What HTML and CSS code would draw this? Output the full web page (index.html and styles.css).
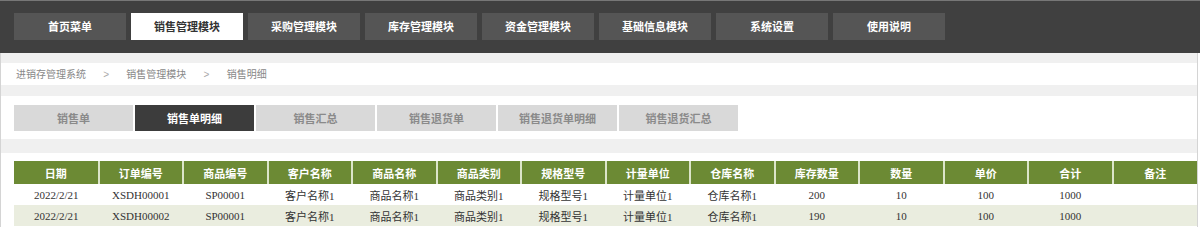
FILE: index.html
```html
<!DOCTYPE html>
<html lang="zh-CN">
<head>
    <meta charset="UTF-8">
    <meta name="viewport" content="width=device-width, initial-scale=1.0">
    <title>进销存管理系统 - 销售明细</title>
    <link rel="stylesheet" href="styles.css">
</head>
<body>

<!-- Top menu -->
<div class="topbar">
    <a class="nav-btn" href="#">首页菜单</a>
    <a class="nav-btn active" href="#">销售管理模块</a>
    <a class="nav-btn" href="#">采购管理模块</a>
    <a class="nav-btn" href="#">库存管理模块</a>
    <a class="nav-btn" href="#">资金管理模块</a>
    <a class="nav-btn" href="#">基础信息模块</a>
    <a class="nav-btn" href="#">系统设置</a>
    <a class="nav-btn" href="#">使用说明</a>
</div>

<div class="main">
    <!-- Breadcrumb -->
    <div class="crumbs">
        <span>进销存管理系统</span>
        <span class="sep">&gt;</span>
        <span>销售管理模块</span>
        <span class="sep">&gt;</span>
        <span>销售明细</span>
    </div>

    <!-- Sub tabs -->
    <div class="tabs">
        <a class="tab" href="#">销售单</a>
        <a class="tab active" href="#">销售单明细</a>
        <a class="tab" href="#">销售汇总</a>
        <a class="tab" href="#">销售退货单</a>
        <a class="tab" href="#">销售退货单明细</a>
        <a class="tab" href="#">销售退货汇总</a>
    </div>

    <!-- Detail table -->
    <div class="table-wrap">
        <table class="detail">
            <thead>
                <tr>
                    <th>日期</th>
                    <th>订单编号</th>
                    <th>商品编号</th>
                    <th>客户名称</th>
                    <th>商品名称</th>
                    <th>商品类别</th>
                    <th>规格型号</th>
                    <th>计量单位</th>
                    <th>仓库名称</th>
                    <th>库存数量</th>
                    <th>数量</th>
                    <th>单价</th>
                    <th>合计</th>
                    <th>备注</th>
                </tr>
            </thead>
            <tbody>
                <tr>
                    <td>2022/2/21</td>
                    <td>XSDH00001</td>
                    <td>SP00001</td>
                    <td>客户名称1</td>
                    <td>商品名称1</td>
                    <td>商品类别1</td>
                    <td>规格型号1</td>
                    <td>计量单位1</td>
                    <td>仓库名称1</td>
                    <td>200</td>
                    <td>10</td>
                    <td>100</td>
                    <td>1000</td>
                    <td></td>
                </tr>
                <tr class="alt">
                    <td>2022/2/21</td>
                    <td>XSDH00002</td>
                    <td>SP00001</td>
                    <td>客户名称1</td>
                    <td>商品名称1</td>
                    <td>商品类别1</td>
                    <td>规格型号1</td>
                    <td>计量单位1</td>
                    <td>仓库名称1</td>
                    <td>190</td>
                    <td>10</td>
                    <td>100</td>
                    <td>1000</td>
                    <td></td>
                </tr>
            </tbody>
        </table>
    </div>
</div>

</body>
</html>
```

FILE: styles.css
```css
body {
    margin: 0;
    font-family: "Noto Sans CJK SC", sans-serif;
    background-color: #fff;
}
a {
    text-decoration: none;
}

/* top menu */
.topbar {
    display: flex;
    gap: 5px;
    height: 27px;
    padding: 12px 14px 13px;
    background-color: #404040;
    border-top: 1px solid #777;
}
.nav-btn {
    width: 112px;
    height: 27px;
    line-height: 27px;
    text-align: center;
    background-color: #555;
    color: #fff;
    font-size: 11px;
    font-weight: bold;
}
.nav-btn.active {
    background-color: #fff;
    color: #333;
}

/* page body */
.main {
    width: 1198px;
    box-sizing: border-box;
    padding-top: 10px;
    background-color: #f0f0f0;
    border-left: 1px solid #d4d4d4;
    border-right: 1px solid #d4d4d4;
}
.crumbs {
    height: 22px;
    line-height: 22px;
    padding-left: 15px;
    margin-bottom: 11px;
    background-color: #fff;
    color: #888;
    font-size: 10px;
}
.crumbs .sep {
    padding: 0 15px;
    font-family: "Liberation Sans", sans-serif;
    color: #aaa;
}

.tabs {
    display: flex;
    gap: 2px;
    padding: 9px 13px 8px;
    margin-bottom: 14px;
    background-color: #fff;
}
.tab {
    width: 119px;
    height: 26px;
    line-height: 26px;
    text-align: center;
    background-color: #d9d9d9;
    color: #8a8a8a;
    font-size: 11px;
    font-weight: bold;
}
.tab.active {
    background-color: #3c3c3c;
    color: #fff;
}

/* table */
.table-wrap {
    padding: 8px 0 20px 13px;
    background-color: #fff;
}
.detail {
    width: 1183px;
    border-collapse: collapse;
    table-layout: fixed;
}
.detail th {
    height: 23px;
    padding: 0;
    background-color: #6c8a34;
    color: #fff;
    font-size: 11px;
    font-weight: bold;
    border-left: 2px solid #dce5c9;
}
.detail th:first-child {
    border-left: none;
}
.detail td {
    height: 21px;
    padding: 0;
    text-align: center;
    color: #333;
    font-size: 11px;
    font-family: "Liberation Serif", "Noto Sans CJK SC", serif;
}
.detail tr.alt td {
    background-color: #eaeddf;
}
```
